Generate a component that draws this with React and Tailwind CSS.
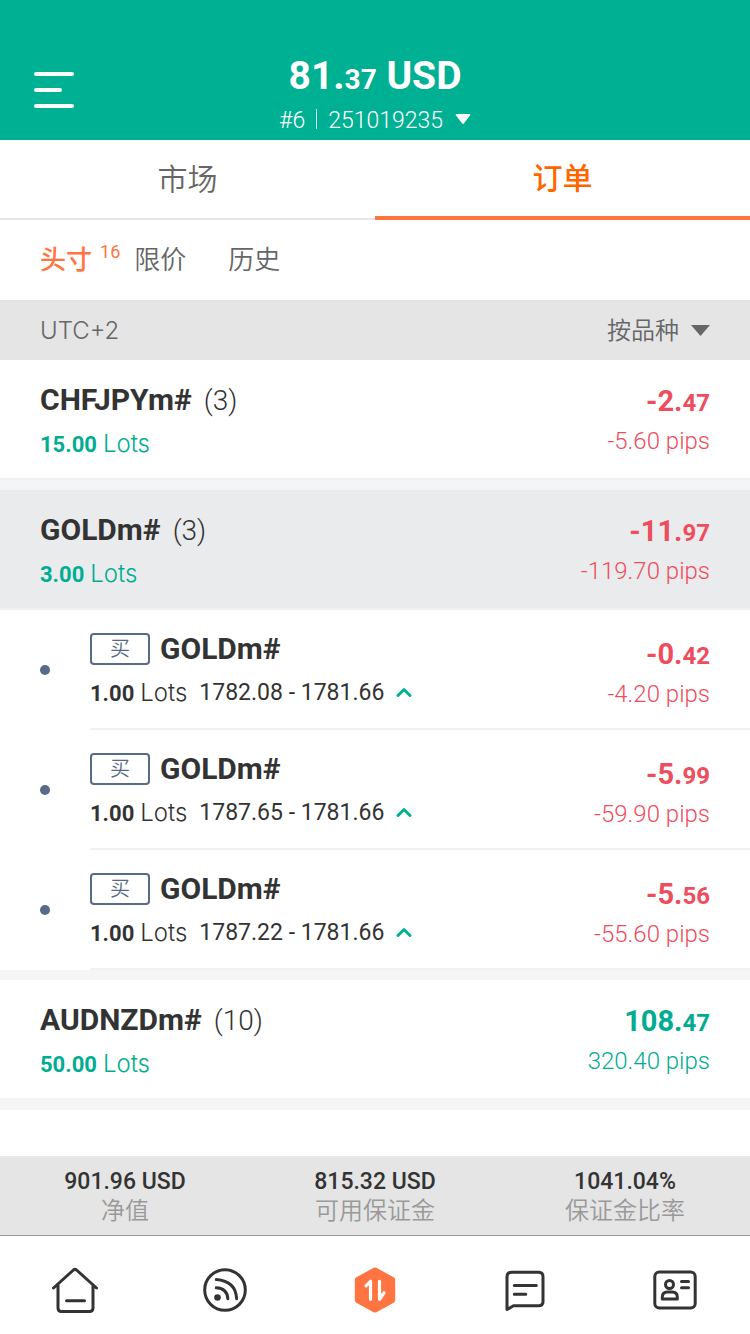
import React from "react";

const GROUPS = [
  { symbol: "CHFJPYm#", count: 3, lots: "15.00", whole: "-2.", cents: "47", pips: "-5.60 pips" },
  {
    symbol: "GOLDm#",
    count: 3,
    lots: "3.00",
    whole: "-11.",
    cents: "97",
    pips: "-119.70 pips",
    orders: [
      { open: "1782.08", now: "1781.66", whole: "-0.", cents: "42", pips: "-4.20 pips" },
      { open: "1787.65", now: "1781.66", whole: "-5.", cents: "99", pips: "-59.90 pips" },
      { open: "1787.22", now: "1781.66", whole: "-5.", cents: "56", pips: "-55.60 pips" },
    ],
  },
  { symbol: "AUDNZDm#", count: 10, lots: "50.00", whole: "108.", cents: "47", pips: "320.40 pips", gain: true },
];

const SUMMARY = [
  { value: "901.96 USD", label: "净值" },
  { value: "815.32 USD", label: "可用保证金" },
  { value: "1041.04%", label: "保证金比率" },
];

function Result({ whole, cents, pips, gain, nested }) {
  return (
    <div className={`flex flex-col items-end ${nested ? "pt-6" : "pt-[21px]"} ${gain ? "text-[#00ad91]" : "text-[#ee4d5d]"}`}>
      <div className="text-[29px] leading-10 font-bold">
        {whole}
        <span className="text-[24px]">{cents}</span>
      </div>
      <div className="text-[24px] leading-9 font-[350]">{pips}</div>
    </div>
  );
}

function Order({ order }) {
  return (
    <li className="flex h-30 items-stretch pl-10">
      <div className="flex w-[50px] items-center">
        <span className="size-[10px] rounded-full bg-[#576a87]" />
      </div>
      <div className="flex flex-1 justify-between border-b-2 border-[#f2f2f2] pr-10">
        <div className="pt-5">
          <div className="flex h-[38px] items-center gap-[10px]">
            <span className="flex h-8 w-[60px] items-center justify-center rounded-[4px] border-2 border-[#576a87] text-[20px] leading-none font-[350] text-[#576a87]">
              买
            </span>
            <span className="text-[30px] leading-10 font-bold">GOLDm#</span>
          </div>
          <div className="mt-[5px] flex h-10 items-center">
            <span className="text-[22px] font-bold">1.00</span>
            <span className="ml-[6px] font-['Inter',sans-serif] text-[24px] font-[350]">Lots</span>
            <span className="ml-3 text-[23px] font-normal">
              {order.open} - {order.now}
            </span>
            <svg className="ml-3 h-3 w-4" viewBox="0 0 16 12" fill="none" stroke="#00b092" strokeWidth="3" strokeLinecap="round" strokeLinejoin="round" aria-hidden="true">
              <path d="M2 8.500 8 2.500l6 6" />
            </svg>
          </div>
        </div>
        <Result {...order} nested />
      </div>
    </li>
  );
}

function Group({ group }) {
  return (
    <section className="border-b-[10px] border-[#f4f5f7]">
      <div className={`flex h-30 justify-between border-b-2 border-[#f2f2f2] px-10 ${group.orders ? "bg-[#eaebed]" : "bg-white"}`}>
        <div className="pt-5">
          <h2 className="text-[30px] leading-10 font-bold">
            {group.symbol}
            <span className="ml-3 text-[28px] font-light">({group.count})</span>
          </h2>
          <div className="mt-[3px] flex h-10 items-center text-[#00ad91]">
            <span className="text-[22px] font-bold">{group.lots}</span>
            <span className="ml-[6px] font-['Inter',sans-serif] text-[24px] font-[350]">Lots</span>
          </div>
        </div>
        <Result {...group} />
      </div>
      {group.orders && (
        <ul>
          {group.orders.map((order) => (
            <Order key={order.open} order={order} />
          ))}
        </ul>
      )}
    </section>
  );
}

function NavIcon({ children }) {
  return (
    <svg className="size-[50px]" viewBox="0 0 50 50" fill="none" stroke="#333" strokeWidth="3" strokeLinecap="round" strokeLinejoin="round" aria-hidden="true">
      {children}
    </svg>
  );
}

const NAV = [
  {
    name: "Home",
    icon: (
      <NavIcon>
        <path d="M3.500 23 23.500 5q1.500-1.200 3 0L46.500 23M8 20v23q0 3.500 3.500 3.500h28q3.500 0 3.500-3.500V20M16.500 35.800h18" />
      </NavIcon>
    ),
  },
  {
    name: "Signals",
    icon: (
      <NavIcon>
        <circle cx="25" cy="25" r="20.300" />
        <circle cx="17.500" cy="32.500" r="3.300" fill="#333" stroke="none" />
        <path d="M16.300 22.800q11 .7 11.500 11M16.300 14.500q19.500 1.500 20.300 19.300" />
      </NavIcon>
    ),
  },
  {
    name: "Trade",
    icon: (
      <NavIcon>
        <path d="M25 5.500 42.200 15v20L25 44.500 7.800 35V15Z" fill="#ff7441" stroke="#ff7441" strokeWidth="6" />
        <path d="M16 20.800l4.500-4.500v18M29.500 16.300v18l4.500-6.500" stroke="white" strokeWidth="3.200" />
      </NavIcon>
    ),
  },
  {
    name: "Messages",
    icon: (
      <NavIcon>
        <path d="M7 44.500V12q0-4.800 4.800-4.800h27Q43 7.200 43 12v24.500q0 4.300-4.200 4.300H13.500ZM14.300 20.600h22M14.300 29.300h11.500" />
      </NavIcon>
    ),
  },
  {
    name: "Account",
    icon: (
      <NavIcon>
        <rect x="4.800" y="7" width="40.400" height="36" rx="4.500" />
        <circle cx="19.500" cy="19.500" r="4" />
        <path d="M12.300 34v-2q0-5 5-5h5q5 0 5 5v2ZM31.500 16.500h7M31.500 22.800h7" />
      </NavIcon>
    ),
  },
];

export default function App() {
  return (
    <div className="flex min-h-screen flex-col bg-white font-[Roboto,'Noto_Sans_CJK_SC',sans-serif] text-[#333]">
      <header className="grid h-35 grid-cols-[100px_1fr_100px] bg-[#00b092] text-white">
        <button type="button" aria-label="Menu" className="flex items-start pt-[71px] pl-[34px]">
          <svg className="h-[38px] w-10" viewBox="0 0 40 38" stroke="white" strokeWidth="4" strokeLinecap="round" aria-hidden="true">
            <path d="M2 3h36M2 19h24M2 35h36" />
          </svg>
        </button>
        <div className="flex flex-col items-center pt-[51px]">
          <h1 className="text-[39px] leading-[50px] font-bold">
            81.<span className="text-[28px]">37</span> USD
          </h1>
          <button type="button" className="flex h-8 items-center text-[23px] font-light">
            #6
            <span className="mx-[11px] mb-1 h-5 w-px bg-white/80" />
            251019235
            <svg className="mb-1 ml-3 h-[10px] w-4" viewBox="0 0 16 10" fill="white" aria-hidden="true">
              <path d="M1.500 0h13q1.500 0 .6 1.200L9 9.300q-1 1.200-2 0L.9 1.200Q0 0 1.500 0Z" />
            </svg>
          </button>
        </div>
      </header>

      <nav className="grid h-20 grid-cols-2 text-[30px]">
        <a href="#market" className="flex items-center justify-center border-b-2 border-[#e5e5e5] font-[350] text-[#666]">
          市场
        </a>
        <a href="#orders" className="flex items-center justify-center border-b-4 border-[#ff7441] font-medium text-[#ff6600]">
          订单
        </a>
      </nav>

      <div className="flex h-20 items-center pl-10 text-[26px] font-[350] text-[#666]">
        <button type="button" className="flex items-center font-medium text-[#ff7441]">
          头寸
          <span className="mb-4 ml-2 text-[18px] leading-none font-normal">16</span>
        </button>
        <button type="button" className="ml-[14px]">限价</button>
        <button type="button" className="ml-[42px]">历史</button>
      </div>

      <div className="flex h-15 items-center justify-between bg-[#e5e5e5] px-10 pt-px text-[24px] font-[350] text-[#666]">
        <span className="font-['Inter',sans-serif]">UTC+2</span>
        <button type="button" className="flex items-center gap-3">
          按品种
          <svg className="h-[11px] w-[19px]" viewBox="0 0 19 11" fill="#666" aria-hidden="true">
            <path d="M0 0h19L9.500 11Z" />
          </svg>
        </button>
      </div>

      <main className="flex-1">
        {GROUPS.map((group) => (
          <Group key={group.symbol} group={group} />
        ))}
      </main>

      <footer>
        <dl className="grid h-20 grid-cols-3 border-t-2 border-b border-t-[#e9e9e9] border-b-[#999] bg-[#e5e5e5] text-center">
          {SUMMARY.map((item) => (
            <div key={item.label} className="flex flex-col-reverse justify-end pt-[10px]">
              <dt className="text-[24px] leading-[30px] font-[350] text-[#999]">{item.label}</dt>
              <dd className="text-[23px] leading-7 font-medium">{item.value}</dd>
            </div>
          ))}
        </dl>
        <nav className="grid h-[98px] grid-cols-5 pt-[29px]">
          {NAV.map((item) => (
            <a key={item.name} href={`#${item.name.toLowerCase()}`} aria-label={item.name} className="flex items-start justify-center">
              {item.icon}
            </a>
          ))}
        </nav>
      </footer>
    </div>
  );
}
